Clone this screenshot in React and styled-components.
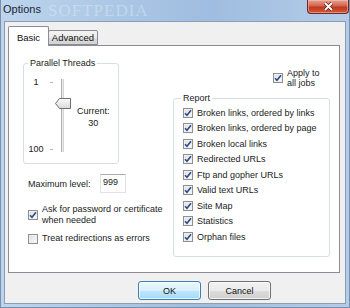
import React from 'react';
import styled, { createGlobalStyle } from 'styled-components';

const GlobalStyle = createGlobalStyle`
  html, body { margin: 0; padding: 0; }
  body {
    width: 350px;
    height: 308px;
    overflow: hidden;
    font-family: "Liberation Sans", Arial, sans-serif;
    font-size: 9px;
    color: #1a1a1a;
  }
`;

const Frame = styled.div`
  width: 350px;
  height: 308px;
  box-sizing: border-box;
  display: flex;
  flex-direction: column;
  padding: 0 3px 3px 3px;
  background: linear-gradient(90deg, #bdd4ec 0%, #aac6e5 35%, #9fbde0 60%, #b4cce8 100%);
  border-left: 1px solid #7890ad;
  border-right: 1px solid #7890ad;
  border-bottom: 1px solid #7890ad;
`;

const TitleBar = styled.div`
  position: relative;
  height: 21px;
  display: flex;
  align-items: flex-start;
  justify-content: space-between;
  flex-shrink: 0;
`;

const Title = styled.span`
  font-size: 11px;
  line-height: 18px;
  color: #1c2636;
  margin-left: -1px;
`;

/* faint site watermark floating over the glass */
const Watermark = styled.span`
  position: absolute;
  left: 44px;
  top: 1px;
  font-family: "Liberation Serif", serif;
  font-size: 17px;
  letter-spacing: 1px;
  color: rgba(255, 255, 255, 0.3);
  pointer-events: none;
`;

const CloseButton = styled.div`
  width: 42px;
  height: 14px;
  margin-right: -3px;
  box-sizing: border-box;
  border: 1px solid #6b2a22;
  border-top: none;
  border-radius: 0 0 4px 4px;
  background: linear-gradient(180deg, #e4a293 0%, #d3644c 45%, #c1391f 55%, #d0593c 100%);
  box-shadow: inset 0 0 0 1px rgba(255, 200, 190, 0.5);
  display: flex;
  align-items: center;
  justify-content: center;
`;

const Client = styled.div`
  flex: 1;
  display: flex;
  flex-direction: column;
  background: #f0f0f0;
  border: 1px solid #8c9db3;
`;

const TabRow = styled.div`
  height: 23px;
  display: flex;
  align-items: flex-end;
  padding-left: 3px;
  flex-shrink: 0;
`;

const Tab = styled.div`
  position: relative;
  box-sizing: border-box;
  height: ${p => (p.$active ? '20px' : '15px')};
  width: ${p => (p.$active ? '41px' : '50px')};
  margin-left: ${p => (p.$active ? '0' : '-1px')};
  margin-bottom: ${p => (p.$active ? '-1px' : '0')};
  z-index: ${p => (p.$active ? 1 : 0)};
  border: 1px solid #898c95;
  border-bottom: ${p => (p.$active ? 'none' : '1px solid #898c95')};
  border-radius: 2px 2px 0 0;
  background: ${p => (p.$active ? '#ffffff' : 'linear-gradient(180deg, #f3f3f3 0%, #ebebeb 50%, #dedede 51%, #d2d2d2 100%)')};
  display: flex;
  align-items: ${p => (p.$active ? 'flex-start' : 'center')};
  padding-top: ${p => (p.$active ? '5px' : '0')};
  justify-content: center;
  font-size: 9.5px;
  color: #111;
`;

const Panel = styled.div`
  box-sizing: border-box;
  height: 228px;
  margin: 0 5px 0 3px;
  background: #ffffff;
  border: 1px solid #898c95;
  display: flex;
  padding: 11px 0 0 14px;
  flex-shrink: 0;
`;

const LeftColumn = styled.div`
  width: 150px;
  display: flex;
  flex-direction: column;
`;

const RightColumn = styled.div`
  width: 157px;
  display: flex;
  flex-direction: column;
`;

const Group = styled.fieldset`
  margin: 0;
  margin-top: ${p => p.$top || 0}px;
  box-sizing: border-box;
  width: ${p => p.$width}px;
  border: 1px solid #d5dfe5;
  border-radius: 3px;
  padding: ${p => p.$pad};
  min-width: 0;
`;

const Legend = styled.legend`
  padding: 0 2px;
  margin-left: ${p => p.$offset}px;
  line-height: 12px;
  font-size: 9px;
`;

const SliderArea = styled.div`
  display: flex;
  align-items: flex-start;
  margin-top: 10px;
`;

const Scale = styled.div`
  height: 77px;
  margin-top: -2px;
  display: flex;
  flex-direction: column;
  justify-content: space-between;
`;

const ScaleRow = styled.div`
  height: 10px;
  display: flex;
  align-items: center;
`;

const ScaleLabel = styled.span`
  width: 24px;
  text-align: center;
  line-height: 10px;
`;

const Tick = styled.span`
  width: 3px;
  height: 1px;
  margin-left: 2px;
  background: #b4b4b4;
`;

const Track = styled.div`
  position: relative;
  width: 3px;
  height: 73px;
  margin-left: 8px;
  box-sizing: border-box;
  background: #e7eaea;
  border-left: 1px solid #b1b1b1;
  border-right: 1px solid #d6d6d6;
`;

const Thumb = styled.svg`
  position: absolute;
  left: -7px;
  top: 19px;
`;

const Current = styled.div`
  margin-left: 13px;
  padding-top: 26px;
  text-align: center;
  line-height: 12px;
`;

const LevelRow = styled.div`
  display: flex;
  align-items: center;
  margin-top: 10px;
  padding-left: 5px;
`;

const LevelLabel = styled.span`
  width: 72px;
`;

const NumberInput = styled.div`
  box-sizing: border-box;
  width: 26px;
  height: 19px;
  border: 1px solid #dfe3e9;
  border-top-color: #abadb3;
  background: #fff;
  padding: 2px 0 0 2px;
  line-height: 11px;
`;

const CheckRow = styled.div`
  display: flex;
  align-items: center;
  margin-top: ${p => p.$top || 0}px;
  padding-left: ${p => p.$indent || 0}px;
  height: ${p => p.$height || 'auto'};
`;

const CheckText = styled.span`
  margin-left: 4px;
  line-height: ${p => p.$lh || 10}px;
`;

const Box = styled.span`
  flex-shrink: 0;
  box-sizing: border-box;
  width: 10px;
  height: 10px;
  border: 1px solid #8e8f8f;
  background: linear-gradient(135deg, #d9dadc 0%, #f4f4f4 70%, #fbfbfb 100%);
  box-shadow: inset 0 0 0 1px #f0f0f0;
  display: flex;
  align-items: center;
  justify-content: center;
`;

const ReportList = styled.div`
  display: flex;
  flex-direction: column;
`;

const ButtonRow = styled.div`
  display: flex;
  justify-content: flex-end;
  gap: 7px;
  margin-top: 8px;
  padding-right: 74px;
`;

const Button = styled.div`
  box-sizing: border-box;
  width: 63px;
  height: 19px;
  border-radius: 3px;
  border: 1px solid ${p => (p.$default ? '#3c7fb1' : '#707070')};
  background: ${p =>
    p.$default
      ? 'linear-gradient(180deg, #eaf6fd 0%, #d9f0fc 50%, #bee6fd 51%, #a7d9f5 100%)'
      : 'linear-gradient(180deg, #f2f2f2 0%, #ebebeb 50%, #dddddd 51%, #cfcfcf 100%)'};
  box-shadow: inset 0 0 0 1px rgba(255, 255, 255, 0.7);
  display: flex;
  align-items: center;
  justify-content: center;
  font-size: 9px;
  color: #111;
`;

const CheckBox = ({ checked }) => (
  <Box>
    {checked && (
      <svg width="8" height="8" viewBox="0 0 8 8">
        <path d="M1 4.2 L3 6.3 L7 1.2" fill="none" stroke="#2d4c8c" strokeWidth="1.6" />
      </svg>
    )}
  </Box>
);

const reportItems = [
  'Broken links, ordered by links',
  'Broken links, ordered by page',
  'Broken local links',
  'Redirected URLs',
  'Ftp and gopher URLs',
  'Valid text URLs',
  'Site Map',
  'Statistics',
  'Orphan files',
];

export default function App() {
  return (
    <>
      <GlobalStyle />
      <Frame>
        <TitleBar>
          <Title>Options</Title>
          <Watermark>SOFTPEDIA</Watermark>
          <CloseButton>
            <svg width="11" height="9" viewBox="0 0 11 9">
              <path d="M2 1 L9 8 M9 1 L2 8" stroke="#5a1d14" strokeWidth="3.2" />
              <path d="M2 1 L9 8 M9 1 L2 8" stroke="#ffffff" strokeWidth="1.8" />
            </svg>
          </CloseButton>
        </TitleBar>
        <Client>
          <TabRow>
            <Tab $active>Basic</Tab>
            <Tab>Advanced</Tab>
          </TabRow>
          <Panel>
            <LeftColumn>
              <Group $width={96} $pad="0 0 9px 0">
                <Legend $offset={4}>Parallel Threads</Legend>
                <SliderArea>
                  <Scale>
                    <ScaleRow>
                      <ScaleLabel>1</ScaleLabel>
                      <Tick />
                    </ScaleRow>
                    <ScaleRow>
                      <ScaleLabel>100</ScaleLabel>
                      <Tick />
                    </ScaleRow>
                  </Scale>
                  <Track>
                    <Thumb width="17" height="11" viewBox="0 0 17 11">
                      <defs>
                        <linearGradient id="thumbFill" x1="0" y1="0" x2="0" y2="1">
                          <stop offset="0" stopColor="#fbfbfb" />
                          <stop offset="1" stopColor="#d9d9d9" />
                        </linearGradient>
                      </defs>
                      <path d="M0.5 5.5 L4.5 0.5 H15.5 V10.5 H4.5 Z" fill="url(#thumbFill)" stroke="#6f6f6f" />
                    </Thumb>
                  </Track>
                  <Current>
                    Current:
                    <br />
                    30
                  </Current>
                </SliderArea>
              </Group>
              <LevelRow>
                <LevelLabel>Maximum level:</LevelLabel>
                <NumberInput>999</NumberInput>
              </LevelRow>
              <CheckRow $top={11} $indent={5}>
                <CheckBox checked />
                <CheckText $lh={10.5}>
                  Ask for password or certificate
                  <br />
                  when needed
                </CheckText>
              </CheckRow>
              <CheckRow $top={8} $indent={5}>
                <CheckBox />
                <CheckText $lh={11}>Treat redirections as errors</CheckText>
              </CheckRow>
            </LeftColumn>
            <RightColumn>
              <CheckRow $top={11} $indent={100}>
                <CheckBox checked />
                <CheckText $lh={10}>
                  Apply to
                  <br />
                  all jobs
                </CheckText>
              </CheckRow>
              <Group $width={157} $top={4} $pad="1px 6px 11px 9px">
                <Legend $offset={-2}>Report</Legend>
                <ReportList>
                  {reportItems.map(item => (
                    <CheckRow key={item} $height="15.5px">
                      <CheckBox checked />
                      <CheckText>{item}</CheckText>
                    </CheckRow>
                  ))}
                </ReportList>
              </Group>
            </RightColumn>
          </Panel>
          <ButtonRow>
            <Button $default>OK</Button>
            <Button>Cancel</Button>
          </ButtonRow>
        </Client>
      </Frame>
    </>
  );
}
